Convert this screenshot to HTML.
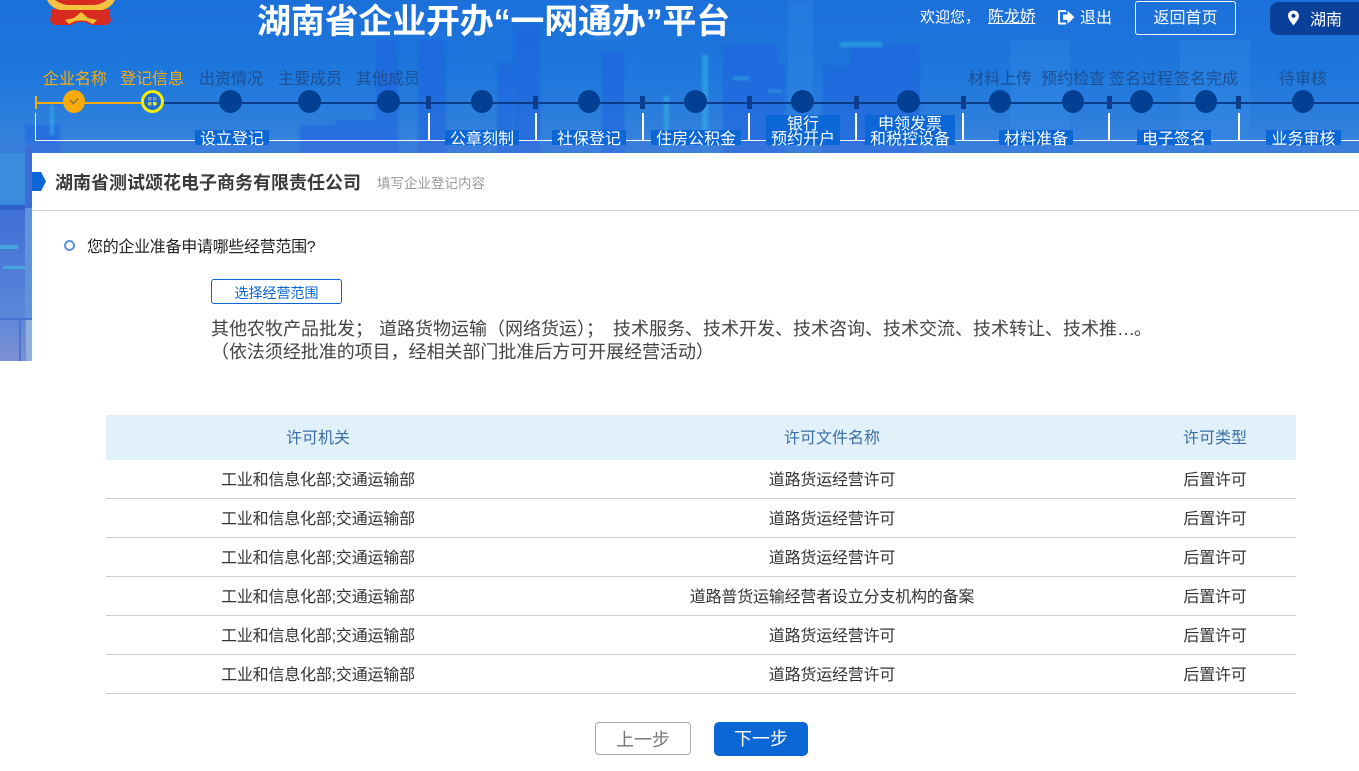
<!DOCTYPE html>
<html lang="zh-CN"><head><meta charset="utf-8"><title>湖南省企业开办一网通办平台</title>
<style>
html,body{margin:0;padding:0;width:1359px;height:771px;overflow:hidden;background:#fff}
body{position:relative;font-family:"Liberation Sans","Noto Sans CJK SC",sans-serif;color:#333}
.a{position:absolute;white-space:nowrap}
.s{position:absolute;top:70px;font-size:16px;line-height:20px;color:#1d4f94;transform:translateX(-50%);white-space:nowrap}
.c{position:absolute;top:90px;width:23px;height:23px;border-radius:50%;background:#034094}
.t{position:absolute;top:96px;width:5px;height:13px;background:#0c3d8c}
.v{position:absolute;top:113px;width:2px;height:28px;background:#fff}
.l{position:absolute;box-sizing:border-box;padding-top:2px;background:#0b66d6;color:#fff;font-size:16px;line-height:15px;text-align:center;white-space:nowrap}
.r{position:absolute;left:106px;width:1190px;height:38px;border-bottom:1px solid #ccc;font-size:16px;line-height:41px;color:#333;letter-spacing:-.2px}
.r span,.h span{position:absolute;top:0;text-align:center}
.c1{left:0;width:424px}.c2{left:424px;width:604px}.c3{left:1028px;width:162px}
.h{position:absolute;left:106px;top:415px;width:1190px;height:45px;background:#e2f1f9;font-size:16px;line-height:47px;color:#3a6ea5}
</style></head><body>
<svg class="a" style="left:0;top:0" width="1359" height="361" viewBox="0 0 1359 361">
<defs><linearGradient id="g" x1="0" y1="0" x2="0" y2="1"><stop offset="0" stop-color="#1b70da"/><stop offset=".5" stop-color="#1e78dc"/><stop offset="1" stop-color="#3a84dc"/></linearGradient>
<linearGradient id="lft" x1="0" y1="0" x2="0" y2="1"><stop offset="0" stop-color="#3d6fd6"/><stop offset=".7" stop-color="#5c86d8"/><stop offset="1" stop-color="#7f8fd4"/></linearGradient>
<filter id="b"><feGaussianBlur stdDeviation="1"/></filter></defs>
<rect width="1359" height="154" fill="url(#g)"/>
<g filter="url(#b)">
<g fill="#2064e0" opacity=".6">
<rect x="25" y="125" width="35" height="30"/><rect x="300" y="125" width="40" height="30"/><rect x="336" y="120" width="60" height="35"/><rect x="376" y="40" width="22" height="115"/>
<rect x="418" y="40" width="28" height="115"/><rect x="497" y="62" width="15" height="93"/><rect x="513" y="25" width="27" height="130"/><rect x="602" y="52" width="22" height="103"/>
<rect x="723" y="65" width="62" height="90"/><rect x="723" y="45" width="55" height="22"/><rect x="850" y="45" width="70" height="110"/><rect x="823" y="65" width="70" height="90"/>
</g>
<g fill="#3a8fe6" opacity=".3"><rect x="788" y="0" width="25" height="100"/><rect x="590" y="0" width="30" height="40"/><rect x="1010" y="40" width="60" height="110"/><rect x="1180" y="40" width="70" height="110"/></g>
<g fill="#35b5e8" opacity=".55"><rect x="50" y="105" width="4" height="30"/><rect x="702" y="55" width="6" height="100"/><rect x="664" y="96" width="5" height="55"/><rect x="840" y="42" width="42" height="5"/><rect x="733" y="77" width="16" height="3"/><rect x="768" y="90" width="14" height="2"/></g>
<rect x="0" y="142" width="1359" height="12" fill="#3d78dc" opacity=".5"/>
</g>
<rect x="32" y="153" width="1327" height="208" fill="#fff"/>
<rect x="0" y="153" width="25" height="54" fill="#3a8cdc"/>
<rect x="0" y="207" width="25" height="154" fill="url(#lft)"/>
<rect x="25" y="148" width="7" height="213" fill="#5f93dc"/>
<rect x="25" y="148" width="7" height="60" fill="#3d6ed6"/>
<rect x="0" y="205" width="25" height="5" fill="#2e5fc8"/>
<rect x="0" y="245" width="18" height="4" fill="#46a6e0"/><rect x="3" y="266" width="22" height="3" fill="#46a6e0"/>
<rect x="0" y="318" width="32" height="2" fill="#4a74d2"/><rect x="19" y="320" width="2" height="41" fill="#4a74d2"/>
<rect x="26" y="320" width="6" height="41" fill="#8fb0de"/>
<!-- emblem -->
<path d="M52 9 L50 21 L54 25 L70 25 L78 22 L84 22 L92 25 L107 25 L111 21 L109 9 Z" fill="#d92a22"/>
<path d="M47 0 Q51 8 60 10 L102 10 Q111 8 115 0 L107 0 Q100 5 92 5 L70 5 Q62 5 55 0 Z" fill="#f4c23f"/>
<path d="M55 0 Q62 5 70 5 L92 5 Q100 5 107 0 Z" fill="#d92a22"/>
<path d="M65 20 L74 18 Q78 15 81 12 Q85 15 88 18 L97 20 L93 24 L87 21 Q81 20 75 21 L69 24 Z" fill="#f2c03a"/>
</svg>

<div class="a" style="left:257px;top:-1px;font-size:34px;line-height:46px;font-weight:700;color:#fff;letter-spacing:-.2px">湖南省企业开办“一网通办”平台</div>
<div class="a" style="left:920px;top:8px;font-size:15px;line-height:20px;color:#fff">欢迎您，</div>
<div class="a" style="left:988px;top:8px;font-size:16px;line-height:20px;color:#fff;text-decoration:underline;letter-spacing:-.2px">陈龙娇</div>
<svg class="a" style="left:1057px;top:9px" width="18" height="17" viewBox="0 0 18 17"><path d="M9 1H2.500Q1 1 1 2.500V14Q1 15.500 2.500 15.500H9V13.500H3V3H9Z" fill="#fff"/><path d="M6 5.500H10.500V1.800L17.500 8.300L10.500 14.800V11H6Z" fill="#fff"/></svg>
<div class="a" style="left:1080px;top:9px;font-size:16px;line-height:20px;color:#fff">退出</div>
<div class="a" style="left:1135px;top:1px;width:99px;height:32px;border:1px solid #fff;border-radius:3px;text-align:center;font-size:16px;line-height:33px;color:#fff">返回首页</div>
<div class="a" style="left:1270px;top:2px;width:89px;height:33px;background:#0a4099;border-radius:8px 0 0 8px"></div>
<svg class="a" style="left:1287px;top:10px" width="13" height="16" viewBox="0 0 13 16"><path fill-rule="evenodd" d="M6.500 .5C3.200 .5 1 2.900 1 5.800C1 9.300 5 13.500 6.500 15.500C8 13.500 12 9.300 12 5.800C12 2.900 9.800 .5 6.500 .5ZM6.500 3.700A2.100 2.100 0 1 1 6.500 7.900A2.100 2.100 0 0 1 6.500 3.700Z" fill="#fff"/></svg>
<div class="a" style="left:1310px;top:10px;font-size:16px;line-height:21px;color:#fff">湖南</div>

<!-- timeline -->
<div class="a" style="left:36px;top:102px;width:1323px;height:2px;background:#0c3d8c"></div>
<div class="a" style="left:36px;top:102px;width:107px;height:2px;background:#fbab06"></div>
<div class="a" style="left:35px;top:96px;width:2px;height:13px;background:#fbab06"></div>

<div class="s" style="left:75px;color:#fbab06">企业名称</div>
<div class="s" style="left:152px;color:#fbab06">登记信息</div>
<div class="s" style="left:231px">出资情况</div>
<div class="s" style="left:310px">主要成员</div>
<div class="s" style="left:388px">其他成员</div>
<div class="s" style="left:1000px">材料上传</div>
<div class="s" style="left:1073px">预约检查</div>
<div class="s" style="left:1141px">签名过程</div>
<div class="s" style="left:1206px">签名完成</div>
<div class="s" style="left:1303px">待审核</div>

<div class="c" style="left:63px;width:22px;background:#fbab06"></div>
<svg class="a" style="left:68px;top:96px" width="12" height="10" viewBox="0 0 12 10"><path d="M2 4L5.500 7.500L10 2.500" fill="none" stroke="#8a7a45" stroke-width="1.600"/></svg>
<div class="c" style="left:141px;width:17px;height:17px;border:3px solid #f5ef05;background:#1f6dd0;top:90px"></div>
<svg class="a" style="left:147px;top:96px" width="11" height="11" viewBox="0 0 11 11"><rect x="1" y="1" width="3.500" height="3.500" fill="#7d9db0"/><rect x="6" y="1" width="3.500" height="3.500" fill="#7d9db0"/><rect x="1" y="6" width="3.500" height="3.500" fill="#b9c765"/><rect x="6" y="6" width="3.500" height="3.500" fill="#f5ef05"/></svg>
<div class="c" style="left:219px"></div><div class="c" style="left:298px"></div><div class="c" style="left:377px"></div>
<div class="c" style="left:471px;width:22px"></div><div class="c" style="left:578px;width:22px"></div><div class="c" style="left:684px"></div><div class="c" style="left:791px"></div><div class="c" style="left:897px"></div><div class="c" style="left:989px;width:22px"></div><div class="c" style="left:1062px;width:22px"></div><div class="c" style="left:1130px"></div><div class="c" style="left:1195px;width:22px"></div><div class="c" style="left:1292px;width:22px"></div>

<div class="t" style="left:426px"></div><div class="t" style="left:533px"></div><div class="t" style="left:640px"></div><div class="t" style="left:747px"></div><div class="t" style="left:854px"></div><div class="t" style="left:961px"></div><div class="t" style="left:1107px"></div><div class="t" style="left:1236px"></div>

<div class="a" style="left:35px;top:140px;width:1324px;height:1px;background:#fff"></div>
<div class="v" style="left:35px;width:1px"></div><div class="v" style="left:428px"></div><div class="v" style="left:535px"></div><div class="v" style="left:642px"></div><div class="v" style="left:748px"></div><div class="v" style="left:855px"></div><div class="v" style="left:962px"></div><div class="v" style="left:1108px"></div><div class="v" style="left:1238px"></div>

<div class="l" style="left:195px;top:130px;width:74px;height:15px">设立登记</div>
<div class="l" style="left:445px;top:130px;width:74px;height:15px">公章刻制</div>
<div class="l" style="left:552px;top:130px;width:74px;height:15px">社保登记</div>
<div class="l" style="left:651px;top:130px;width:90px;height:15px">住房公积金</div>
<div class="l" style="left:766px;top:115px;width:74px;height:30px">银行<br>预约开户</div>
<div class="l" style="left:865px;top:115px;width:90px;height:30px">申领发票<br>和税控设备</div>
<div class="l" style="left:999px;top:130px;width:74px;height:15px">材料准备</div>
<div class="l" style="left:1137px;top:130px;width:74px;height:15px">电子签名</div>
<div class="l" style="left:1266px;top:130px;width:75px;height:15px">业务审核</div>

<!-- heading -->
<svg class="a" style="left:32px;top:172px" width="15" height="19" viewBox="0 0 15 19"><path d="M0 0H9L14 9.500L9 19H0Z" fill="#0b66d6"/></svg>
<div class="a" style="left:55px;top:172px;font-size:18px;line-height:23px;font-weight:700;color:#3a3a3a">湖南省测试颂花电子商务有限责任公司</div>
<div class="a" style="left:377px;top:175px;font-size:13.500px;line-height:18px;color:#999">填写企业登记内容</div>
<div class="a" style="left:32px;top:210px;width:1327px;height:1px;background:#d4d4d4"></div>

<div class="a" style="left:64px;top:240px;width:7px;height:7px;border:2px solid #5b93e0;border-radius:50%;box-sizing:content-box"></div>
<div class="a" style="left:87px;top:238px;font-size:16px;line-height:20px;letter-spacing:-.3px;color:#222">您的企业准备申请哪些经营范围?</div>
<div class="a" style="left:211px;top:279px;width:129px;height:23px;border:1px solid #0b66d6;border-radius:3px;text-align:center;font-size:14px;line-height:26px;color:#0b66d6">选择经营范围</div>
<div class="a" style="left:211px;top:318px;font-size:18px;line-height:23px;color:#444">其他农牧产品批发；</div>
<div class="a" style="left:379px;top:318px;font-size:18px;line-height:23px;color:#444">道路货物运输（网络货运）；</div>
<div class="a" style="left:613px;top:318px;font-size:18px;line-height:23px;color:#444">技术服务、技术开发、技术咨询、技术交流、技术转让、技术推<span style="letter-spacing:-1px">…。</span></div>
<div class="a" style="left:211px;top:341px;font-size:18px;line-height:23px;color:#444;letter-spacing:-.04px">（依法须经批准的项目，经相关部门批准后方可开展经营活动）</div>

<!-- table -->
<div class="h"><span class="c1">许可机关</span><span class="c2">许可文件名称</span><span class="c3">许可类型</span></div>
<div class="r" style="top:460px"><span class="c1">工业和信息化部;交通运输部</span><span class="c2">道路货运经营许可</span><span class="c3">后置许可</span></div>
<div class="r" style="top:499px"><span class="c1">工业和信息化部;交通运输部</span><span class="c2">道路货运经营许可</span><span class="c3">后置许可</span></div>
<div class="r" style="top:538px"><span class="c1">工业和信息化部;交通运输部</span><span class="c2">道路货运经营许可</span><span class="c3">后置许可</span></div>
<div class="r" style="top:577px"><span class="c1">工业和信息化部;交通运输部</span><span class="c2">道路普货运输经营者设立分支机构的备案</span><span class="c3">后置许可</span></div>
<div class="r" style="top:616px"><span class="c1">工业和信息化部;交通运输部</span><span class="c2">道路货运经营许可</span><span class="c3">后置许可</span></div>
<div class="r" style="top:655px"><span class="c1">工业和信息化部;交通运输部</span><span class="c2">道路货运经营许可</span><span class="c3">后置许可</span></div>

<div class="a" style="left:595px;top:722px;width:94px;height:31px;border:1px solid #aaa;border-radius:4px;text-align:center;font-size:18px;line-height:35px;color:#777">上一步</div>
<div class="a" style="left:714px;top:722px;width:94px;height:34px;background:#0b66d6;border-radius:5px;text-align:center;font-size:18px;line-height:35px;color:#fff">下一步</div>
</body></html>
